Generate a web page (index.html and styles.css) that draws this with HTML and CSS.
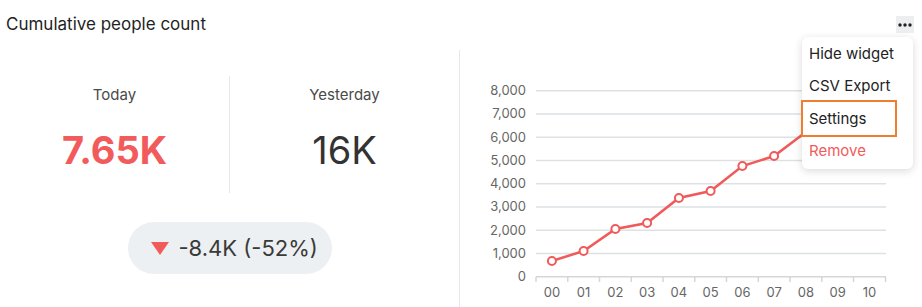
FILE: index.html
```html
<!DOCTYPE html>
<html lang="en">
<head>
    <meta charset="UTF-8">
    <title>Cumulative people count</title>
    <link rel="stylesheet" href="styles.css">
</head>
<body>
    <div class="widget">
        <!-- header -->
        <div class="widget-header">
            <h2 class="widget-title">Cumulative people count</h2>
            <button class="more-btn" aria-label="More">
                <svg width="18" height="17" viewBox="0 0 18 17"><circle cx="4" cy="9" r="1.7"/><circle cx="9" cy="9" r="1.7"/><circle cx="14" cy="9" r="1.7"/></svg>
            </button>
        </div>

        <div class="widget-body">
            <!-- left: numbers -->
            <div class="summary">
                <div class="stats">
                    <div class="stat">
                        <div class="stat-label">Today</div>
                        <div class="stat-value today">7.65K</div>
                    </div>
                    <div class="stat">
                        <div class="stat-label">Yesterday</div>
                        <div class="stat-value">16K</div>
                    </div>
                </div>
                <div class="delta">
                    <span class="delta-arrow"></span>
                    <span class="delta-text">-8.4K (-52%)</span>
                </div>
            </div>

            <!-- right: chart -->
            <div class="chart">
                <svg width="462" height="257" viewBox="0 0 462 257">
                    <g class="grid">
                        <line x1="76" y1="40.7" x2="426" y2="40.7"/>
                        <line x1="76" y1="63.95" x2="426" y2="63.95"/>
                        <line x1="76" y1="87.2" x2="426" y2="87.2"/>
                        <line x1="76" y1="110.45" x2="426" y2="110.45"/>
                        <line x1="76" y1="133.7" x2="426" y2="133.7"/>
                        <line x1="76" y1="156.95" x2="426" y2="156.95"/>
                        <line x1="76" y1="180.2" x2="426" y2="180.2"/>
                        <line x1="76" y1="203.45" x2="426" y2="203.45"/>
                    </g>
                    <g class="axis">
                        <line x1="76" y1="226.7" x2="426" y2="226.7"/>
                        <line x1="76" y1="226.7" x2="76" y2="232"/>
                        <line x1="107.8" y1="226.7" x2="107.8" y2="232"/>
                        <line x1="139.5" y1="226.7" x2="139.5" y2="232"/>
                        <line x1="171.3" y1="226.7" x2="171.3" y2="232"/>
                        <line x1="203" y1="226.7" x2="203" y2="232"/>
                        <line x1="234.8" y1="226.7" x2="234.8" y2="232"/>
                        <line x1="266.5" y1="226.7" x2="266.5" y2="232"/>
                        <line x1="298.3" y1="226.7" x2="298.3" y2="232"/>
                        <line x1="330" y1="226.7" x2="330" y2="232"/>
                        <line x1="361.8" y1="226.7" x2="361.8" y2="232"/>
                        <line x1="393.5" y1="226.7" x2="393.5" y2="232"/>
                        <line x1="425.5" y1="226.7" x2="425.5" y2="232"/>
                    </g>
                    <g class="y-labels">
                        <text x="66" y="45.2">8,000</text>
                        <text x="66" y="68.45">7,000</text>
                        <text x="66" y="91.7">6,000</text>
                        <text x="66" y="114.95">5,000</text>
                        <text x="66" y="138.2">4,000</text>
                        <text x="66" y="161.45">3,000</text>
                        <text x="66" y="184.7">2,000</text>
                        <text x="66" y="207.95">1,000</text>
                        <text x="66" y="231.2">0</text>
                    </g>
                    <g class="x-labels">
                        <text x="91.9" y="246.5">00</text>
                        <text x="123.6" y="246.5">01</text>
                        <text x="155.4" y="246.5">02</text>
                        <text x="187.1" y="246.5">03</text>
                        <text x="218.9" y="246.5">04</text>
                        <text x="250.6" y="246.5">05</text>
                        <text x="282.4" y="246.5">06</text>
                        <text x="314.1" y="246.5">07</text>
                        <text x="345.9" y="246.5">08</text>
                        <text x="377.6" y="246.5">09</text>
                        <text x="409.4" y="246.5">10</text>
                    </g>
                    <polyline class="series" points="91.9,211 123.6,201 155.4,179 187.1,173 218.9,148 250.6,141 282.4,116 314.1,106 345.9,82"/>
                    <g class="dots">
                        <circle cx="91.9" cy="211" r="4"/>
                        <circle cx="123.6" cy="201" r="4"/>
                        <circle cx="155.4" cy="179" r="4"/>
                        <circle cx="187.1" cy="173" r="4"/>
                        <circle cx="218.9" cy="148" r="4"/>
                        <circle cx="250.6" cy="141" r="4"/>
                        <circle cx="282.4" cy="116" r="4"/>
                        <circle cx="314.1" cy="106" r="4"/>
                        <circle cx="345.9" cy="82" r="4"/>
                    </g>
                </svg>
            </div>
        </div>

        <!-- dropdown menu -->
        <ul class="menu">
            <li class="menu-item">Hide widget</li>
            <li class="menu-item">CSV Export</li>
            <li class="menu-item marked">Settings</li>
            <li class="menu-item danger">Remove</li>
        </ul>
    </div>
</body>
</html>
```

FILE: styles.css
```css
body {
    margin: 0;
    font-family: Inter, "Noto Sans", sans-serif;
    background: #fff;
    color: #222;
}
.widget {
    position: relative;
    width: 922px;
    height: 307px;
    overflow: hidden;
}
.widget-header {
    height: 50px;
    display: flex;
    align-items: flex-start;
    justify-content: space-between;
}
.widget-title {
    margin: 14px 0 0 6px;
    font-size: 17px;
    font-weight: 400;
    color: #1f1f1f;
}
.more-btn {
    margin: 16px 8px 0 0;
    width: 18px;
    height: 17px;
    padding: 0;
    border: none;
    background: #eceef0;
    fill: #222;
}
.widget-body {
    display: flex;
    height: 257px;
}
/* left side */
.summary {
    width: 459px;
    border-right: 1px solid #e4e7eb;
}
.stats {
    display: flex;
    margin-top: 26px;
}
.stat {
    width: 229px;
    height: 117px;
    text-align: center;
}
.stat:first-child {
    border-right: 1px solid #e6e8eb;
}
.stat-label {
    margin-top: 9px;
    font-size: 15px;
    line-height: 20px;
    color: #4a4a4a;
}
.stat-value {
    margin-top: 22px;
    font-size: 38px;
    line-height: 46px;
    color: #333;
}
.stat-value.today {
    font-weight: 700;
    color: #f25b5b;
}
.delta {
    width: 204px;
    height: 52px;
    margin: 29px auto 0;
    display: flex;
    align-items: center;
    gap: 10px;
    padding-left: 23px;
    box-sizing: border-box;
    background: #edf0f2;
    border-radius: 26px;
}
.delta-arrow {
    width: 0;
    height: 0;
    border-left: 9px solid transparent;
    border-right: 9px solid transparent;
    border-top: 13px solid #f25b5b;
}
.delta-text {
    font-size: 22px;
    color: #3a3a3a;
}
/* chart */
.chart svg {
    display: block;
}
.grid line {
    stroke: #dde1e4;
    stroke-width: 1.5;
}
.axis line {
    stroke: #d3d7da;
    stroke-width: 1.5;
}
.y-labels text {
    font-size: 13px;
    fill: #666;
    text-anchor: end;
}
.x-labels text {
    font-size: 13px;
    fill: #666;
    text-anchor: middle;
}
.series {
    fill: none;
    stroke: #f05a5a;
    stroke-width: 2.5;
}
.dots circle {
    fill: #fff;
    stroke: #f05a5a;
    stroke-width: 2;
}
/* menu */
.menu {
    position: absolute;
    top: 37px;
    left: 802px;
    width: 111px;
    margin: 0;
    padding: 1px 0 2px;
    list-style: none;
    background: #fff;
    border-radius: 6px;
    box-shadow: 0 2px 8px rgba(0, 0, 0, 0.15);
}
.menu-item {
    height: 32px;
    line-height: 32px;
    padding-left: 7px;
    font-size: 15px;
    color: #222;
}
.menu-item.marked {
    width: 92px;
    height: 33px;
    line-height: 33px;
    margin: 0 0 0 1px;
    padding-left: 6px;
    box-sizing: border-box;
    outline: 2px solid #ef7f2e;
}
.menu-item.danger {
    color: #f25b5b;
}
```
